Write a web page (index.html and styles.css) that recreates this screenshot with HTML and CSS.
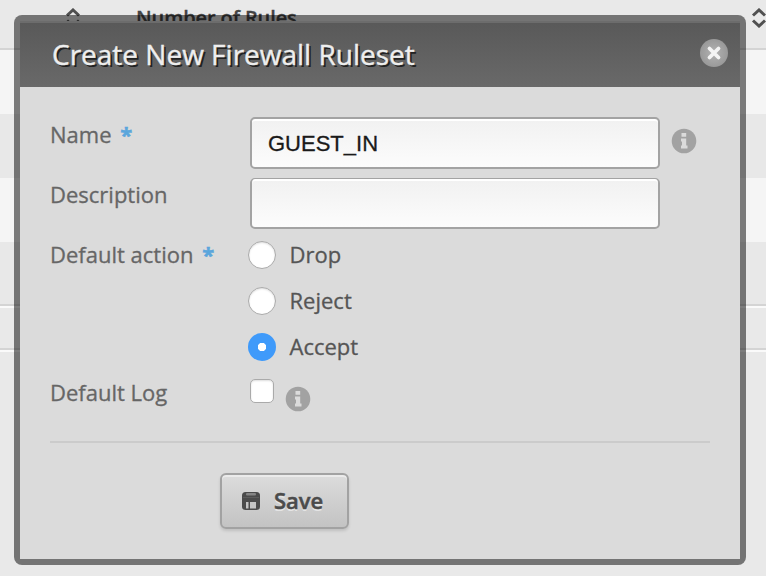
FILE: index.html
```html
<!DOCTYPE html>
<html lang="en">
<head>
<meta charset="utf-8">
<title>Create New Firewall Ruleset</title>
<link rel="stylesheet" href="styles.css">
</head>
<body>
<div class="table">
  <div class="table-head">
    <svg class="sort" width="16" height="20" viewBox="0 0 16 20"><path d="M2 7.500 8 2l6 5.500M2 12.500 8 18l6-5.500"/></svg>
    <span class="column">Number of Rules</span>
    <svg class="sort sort-end" width="16" height="20" viewBox="0 0 16 20"><path d="M2 7.500 8 2l6 5.500M2 12.500 8 18l6-5.500"/></svg>
  </div>
  <div class="row light"></div>
  <div class="row"></div>
  <div class="row light"></div>
  <div class="row last"></div>
  <div class="footer"></div>
  <div class="footer-end"></div>
</div>
<div class="dialog">
  <div class="dialog-head">
    <h1>Create New Firewall Ruleset</h1>
    <svg class="close" width="28" height="28" viewBox="0 0 28 28"><defs><radialGradient id="g"><stop offset="0" stop-color="#b3b3b3"/><stop offset="1" stop-color="#999"/></radialGradient></defs><circle cx="14" cy="14" r="14" fill="url(#g)"/><path d="m9.500 9.500 9 9m0-9-9 9" stroke="#f4f4f4" stroke-width="3.800" stroke-linecap="round"/></svg>
  </div>
  <form class="form">
    <div class="field name-field">
      <label>Name <b>*</b></label>
      <input class="text" type="text" value="GUEST_IN">
      <svg class="info" width="26" height="26" viewBox="0 0 26 26"><circle cx="13" cy="13" r="12.300" fill="#a2a2a2"/><path fill="#dbdbdb" d="M10.500 5h4.700v3.800h-4.700zM10 10.500h5.200v7h1.300v3H10v-3h1v-4h-1z"/></svg>
    </div>
    <div class="field desc-field">
      <label>Description</label>
      <input class="text second" type="text">
    </div>
    <div class="field action-field">
      <label>Default action <b>*</b></label>
      <div class="options">
        <div class="option"><i class="radio"></i><span>Drop</span></div>
        <div class="option"><i class="radio"></i><span>Reject</span></div>
        <div class="option"><i class="radio checked"></i><span>Accept</span></div>
      </div>
    </div>
    <div class="field log-field">
      <label>Default Log</label>
      <i class="checkbox"></i>
      <svg class="info info-log" width="26" height="26" viewBox="0 0 26 26"><circle cx="13" cy="13" r="12.300" fill="#a2a2a2"/><path fill="#dbdbdb" d="M10.500 5h4.700v3.800h-4.700zM10 10.500h5.200v7h1.300v3H10v-3h1v-4h-1z"/></svg>
    </div>
    <div class="actions">
      <button type="button" class="save">
        <svg width="20" height="20" viewBox="0 0 20 20"><rect x="1" y="1" width="18" height="18" rx="3.500" fill="#4b4b4b"/><rect x="5" y="2" width="10" height="2.500" rx="1" fill="#858585"/><path d="M2 6.500h16" stroke="#5c5c5c"/><path d="M5 11h2.500v6.500H5zM9 11h6v6.500H9z" fill="#c4c4c4"/></svg>
        <span>Save</span>
      </button>
    </div>
  </form>
</div>
</body>
</html>
```

FILE: styles.css
```css
* { box-sizing: border-box; }
body {
  margin: 0;
  width: 766px;
  height: 576px;
  overflow: hidden;
  position: relative;
  background: #e9e9e9;
  font-family: "Open Sans", sans-serif;
  font-size: 22px;
  color: #666;
}
svg { display: block; flex: none; fill: none; }
.table-head {
  display: flex;
  height: 50px;
  padding: 8px 0 0 65px;
  border-bottom: 2px solid #d4d4d4;
}
.sort path { stroke: #505050; stroke-width: 3; }
.sort-end { margin-left: auto; margin-right: -1px; }
.column {
  margin: -2px 0 0 55px;
  font-size: 20px;
  line-height: 24px;
  font-weight: 600;
  letter-spacing: -.1px;
  color: #444;
  -webkit-text-stroke: .3px #444;
  white-space: nowrap;
}
.row { height: 64px; background: #e8e8e8; }
.light { background: #f5f5f5; }
.last { height: 62px; }
.footer, .footer-end {
  height: 44px;
  border-top: 2px solid #d4d4d4;
  box-shadow: inset 0 2px #fafafa;
}

.dialog {
  position: absolute;
  left: 14px;
  top: 15px;
  width: 732px;
  height: 550px;
  padding: 6px;
  border-radius: 8px;
  background: rgba(0, 0, 0, .5);
}
.dialog-head {
  display: flex;
  align-items: center;
  justify-content: space-between;
  height: 66px;
  padding: 0 12px 0 32px;
  border-top: 2px solid #6c6c6c;
  background: linear-gradient(#595959, #696969);
}
h1 {
  margin: -2px 0 0;
  font-size: 28px;
  line-height: 40px;
  font-weight: 400;
  color: #eee;
  -webkit-text-stroke: .4px #eee;
  text-shadow: 2px 2px 0 #222;
  white-space: nowrap;
}
.close { margin-top: -4px; }
.form {
  height: 472px;
  padding: 30px;
  background: #dbdbdb;
}
.field { display: flex; align-items: flex-start; }
.name-field { height: 60px; }
.desc-field { height: 60px; }
.action-field { height: 138px; }
.log-field { height: 68px; border-bottom: 2px solid #cbcbcb; }
label {
  width: 200px;
  flex: none;
  line-height: 34px;
  white-space: nowrap;
  -webkit-text-stroke: .3px #666;
}
label b { color: #5ba6dc; margin-left: 3px; -webkit-text-stroke: .5px #5ba6dc; }
.text {
  width: 410px;
  height: 52px;
  margin: 0;
  padding: 2px 16px 0;
  border: 2px solid #a3a3a3;
  border-radius: 5px;
  outline: 0;
  background: linear-gradient(#f1f1f1, #fcfcfc);
  box-shadow: inset 0 2px #fff;
  font: 22px "Liberation Sans", sans-serif;
  color: #1a1a1a;
  -webkit-text-stroke: .3px #1a1a1a;
}
.second { height: 51px; margin-top: 1px; border-top-width: 1px; }
.info { margin: 11px 0 0 11px; }
.options { margin: -5px 0 0 -2px; }
.option {
  display: flex;
  align-items: center;
  gap: 14px;
  height: 46px;
  color: #555;
  -webkit-text-stroke: .3px #555;
}
.option span { margin: -2px 0 0 -.5px; }
.radio {
  width: 28px;
  height: 28px;
  border-radius: 50%;
  border: 1px solid #aaa;
  background: #fff;
  box-shadow: inset 0 1px 2px #ddd;
}
.checked {
  border: 0;
  background: radial-gradient(circle, #fff 0 4px, #3f9afa 4.500px);
  box-shadow: none;
}
.checkbox {
  width: 24px;
  height: 24px;
  margin-top: 4px;
  border-radius: 5px;
  border: 1px solid #aaa;
  background: #fff;
  box-shadow: inset 0 1px 2px #ddd;
}
.info-log { margin-top: 11px; }
.actions { padding: 30px 0 0 170px; }
.save {
  display: flex;
  align-items: center;
  width: 129px;
  height: 56px;
  padding: 0 0 0 19px;
  gap: 13px;
  border: 2px solid #a2a2a2;
  border-radius: 6px;
  background: linear-gradient(#dcdcdc, #c3c3c3);
  box-shadow: inset 0 2px #ebebeb, 0 2px 3px rgba(0, 0, 0, .12);
  font: 600 22px "Open Sans", sans-serif;
  color: #4b4b4b;
  -webkit-text-stroke: .5px #4b4b4b;
  text-shadow: 0 2px 0 #e5e5e5;
}
.save span { margin-top: -2px; }
```
